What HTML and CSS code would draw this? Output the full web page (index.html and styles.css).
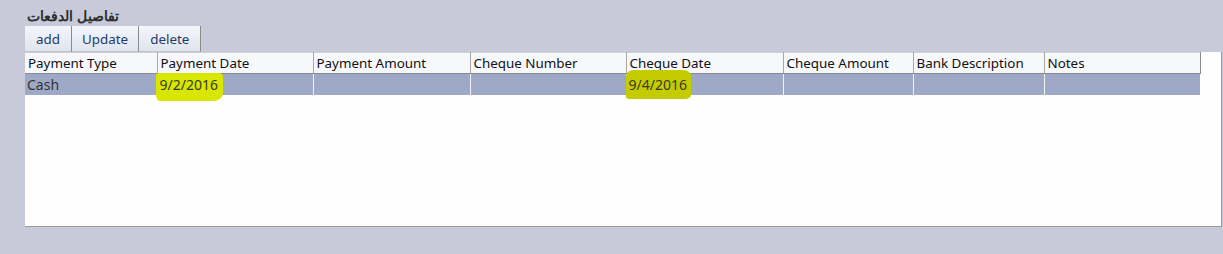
FILE: index.html
```html
<!DOCTYPE html>
<html>
<head>
<meta charset="utf-8">
<link rel="stylesheet" href="styles.css">
</head>
<body>
<div class="page">
  <div class="title" dir="rtl">تفاصيل الدفعات</div>
  <div class="toolbar">
    <button class="btn">add</button>
    <button class="btn">Update</button>
    <button class="btn">delete</button>
  </div>
  <div class="panel">
    <table class="grid">
      <colgroup>
        <col style="width:132px"><col style="width:156px"><col style="width:157px"><col style="width:156px">
        <col style="width:157px"><col style="width:130px"><col style="width:131px"><col style="width:156px">
      </colgroup>
      <thead>
        <tr>
          <th>Payment Type</th><th>Payment Date</th><th>Payment Amount</th><th>Cheque Number</th>
          <th>Cheque Date</th><th>Cheque Amount</th><th>Bank Description</th><th>Notes</th>
        </tr>
      </thead>
      <tbody>
        <tr class="sel">
          <td>Cash</td><td><span class="hl">9/2/2016</span></td><td></td><td></td>
          <td><span class="hl hl2">9/4/2016</span></td><td></td><td></td><td></td>
        </tr>
      </tbody>
    </table>
  </div>
</div>
</body>
</html>
```
FILE: styles.css
```css
html, body {
  margin: 0;
  padding: 0;
  background: #c8cada;
  width: 1223px;
  height: 254px;
  overflow: hidden;
  font-family: "Noto Sans", "Liberation Sans", sans-serif;
}
.page {
  padding: 7px 0 0 25px;
}
.title {
  width: 94px;
  font-size: 14px;
  font-weight: 600;
  line-height: 18px;
  color: #2e2e2e;
  text-align: left;
  padding-left: 2px;
}
.toolbar {
  display: flex;
  height: 26px;
  margin-top: 1px;
}
.btn {
  font-family: inherit;
  font-size: 13.4px;
  color: #1d3b6b;
  background: linear-gradient(#f4f6fb, #dfe4ee);
  border: none;
  border-right: 1px solid #8a8a8a;
  border-bottom: 1px solid #bfc3cc;
  padding: 0 11px;
  height: 26px;
  margin: 0;
}
.btn:nth-child(2) { padding: 0 10px; }
.btn:nth-child(3) { padding: 0 11px; }
.panel {
  width: 1196px;
  height: 174px;
  background: #fefefe;
  border-right: 1px solid #9a9a9a;
  border-bottom: 1px solid #9a9a9a;
}
.grid {
  border-collapse: collapse;
  table-layout: fixed;
  width: 1175px;
  font-size: 13.4px;
}
.grid th {
  text-align: left;
  font-weight: normal;
  color: #111;
  background: #f6f8fc;
  height: 20px;
  padding: 0 3px;
  border-right: 1px solid #a8a8a8;
  border-bottom: 1px solid #8c8c8c;
  border-top: 1px solid #d0d0d0;
  white-space: nowrap;
  overflow: hidden;
}
.grid th:last-child { border-right: 1px solid #8c8c8c; }
.grid td {
  height: 21px;
  padding: 0 2px;
  font-size: 14px;
  color: #333;
  background: #9ea9c8;
  border-right: 1px solid #f2f2f2;
  white-space: nowrap;
}
.grid td:last-child { border-right: none; }
.hl {
  position: relative;
  z-index: 0;
  color: #3a3a22;
}
.hl::before {
  content: "";
  position: absolute;
  z-index: -1;
  left: -4px;
  right: -5px;
  top: -2px;
  bottom: -7px;
  background: #d8e600;
  border-radius: 3px 4px 10px 4px / 3px 4px 8px 6px;
}
.hl2::before {
  left: -3px;
  right: -4px;
  top: -5px;
  bottom: -5px;
  background: #c4cc00;
  border-radius: 8px 8px 6px 3px / 6px 6px 4px 3px;
}
```
